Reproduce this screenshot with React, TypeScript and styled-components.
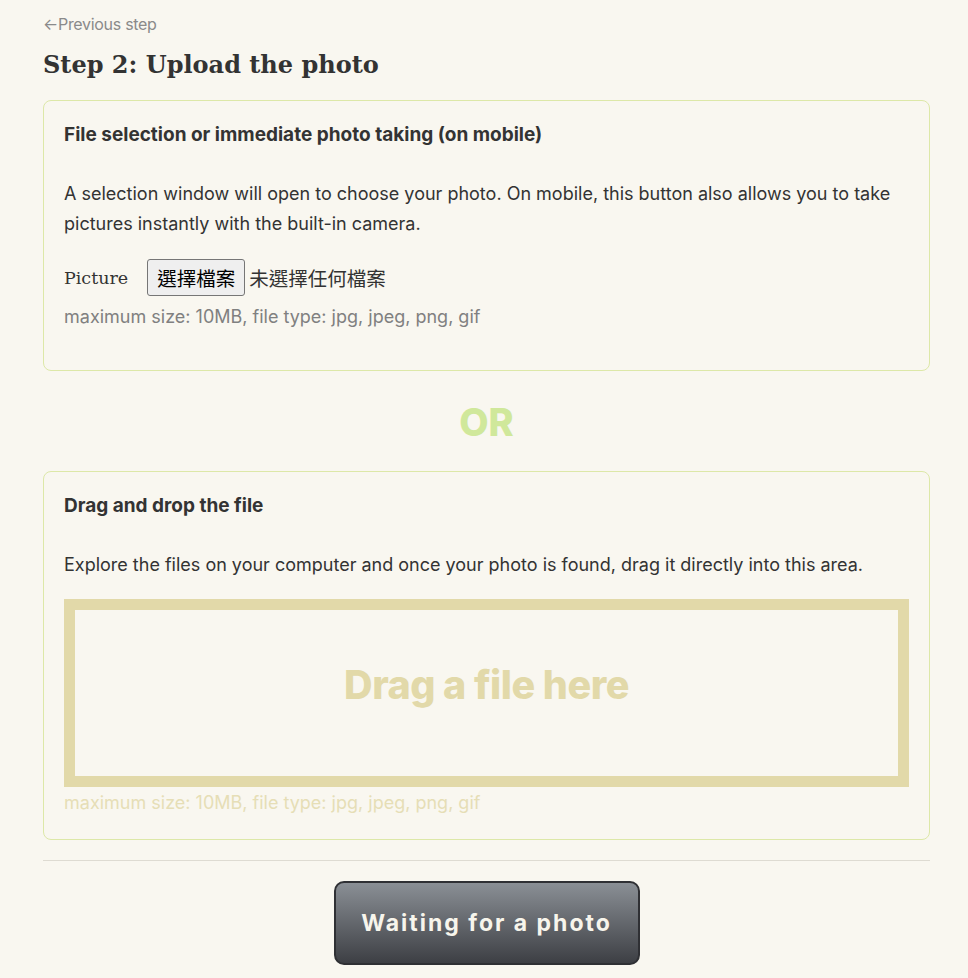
import React from 'react';
import styled, { createGlobalStyle } from 'styled-components';

const GlobalStyle = createGlobalStyle`
  html, body {
    margin: 0;
    background: #f9f7f0;
  }
  body {
    font-family: Inter, "Noto Sans CJK TC", sans-serif;
    color: #333;
  }
`;

const Page = styled.div`
  width: 887px;
  margin-left: 43px;
  padding-top: 14px;
`;

const BackLink = styled.a`
  display: inline-block;
  font-size: 16px;
  color: #8a8a8a;
  text-decoration: none;
  letter-spacing: -0.3px;
`;

const Title = styled.h1`
  font-family: "DejaVu Serif", Georgia, serif;
  font-size: 24px;
  line-height: 29px;
  font-weight: 700;
  color: #333;
  margin: 16px 0 21px;
`;

const Card = styled.section<{ $bottom: number }>`
  border: 1px solid #dde8a8;
  border-radius: 8px;
  padding: 20px 20px ${(p) => p.$bottom}px;
`;

const CardTitle = styled.h2`
  font-size: 19px;
  font-weight: 700;
  margin: 2px 0 33px;
  color: #333;
`;

const Text = styled.p`
  font-size: 18px;
  line-height: 30px;
  margin: 0 0 20px;
  color: #333;
`;

const FileRow = styled.div`
  display: flex;
  align-items: center;
`;

const Label = styled.label`
  font-family: "DejaVu Serif", Georgia, serif;
  font-size: 17.5px;
  color: #333;
  margin-right: 19px;
`;

const FileButton = styled.button`
  font-family: "Noto Sans CJK TC", sans-serif;
  font-size: 19.5px;
  height: 37px;
  padding: 0 9px;
  background: #efefef;
  border: 1px solid #767676;
  border-radius: 3px;
  color: #000;
  margin-right: 4px;
`;

const NoFile = styled.span`
  font-family: "Noto Sans CJK TC", sans-serif;
  font-size: 19.5px;
  color: #333;
`;

const Hint = styled.div<{ $muted?: boolean }>`
  font-size: 18px;
  line-height: 30px;
  color: ${(p) => (p.$muted ? '#e6deb6' : '#808080')};
  margin-top: ${(p) => (p.$muted ? '1px' : '6px')};
  margin-bottom: ${(p) => (p.$muted ? '0' : '15px')};
`;

const Or = styled.div`
  text-align: center;
  font-size: 38px;
  font-weight: 800;
  color: #d0e89b;
  padding: 28px 0 26px;
`;

const DropZone = styled.div`
  border: 11px solid #e2d9a9;
  height: 166px;
  display: flex;
  align-items: center;
  justify-content: center;
  font-size: 39.5px;
  font-weight: 800;
  color: #e2d9a9;
  letter-spacing: -0.5px;
  margin-top: -1px;
`;

const DropLabel = styled.span`
  margin-bottom: 17px;
`;

const Divider = styled.hr`
  border: none;
  border-top: 1px solid #dedbd2;
  margin: 20px 0 20px;
`;

const Footer = styled.div`
  display: flex;
  justify-content: center;
`;

const SubmitButton = styled.button`
  width: 306px;
  height: 84px;
  border: 2px solid #2f3034;
  border-radius: 10px;
  background: linear-gradient(#8a8f95, #3d3f44);
  color: #f7f5ec;
  font-family: Inter, sans-serif;
  font-size: 23px;
  font-weight: 700;
  letter-spacing: 2px;
`;

export default function App() {
  return (
    <>
      <GlobalStyle />
      <Page>
        <BackLink href="#">←Previous step</BackLink>
        <Title>Step 2: Upload the photo</Title>

        <Card $bottom={23}>
          <CardTitle>File selection or immediate photo taking (on mobile)</CardTitle>
          <Text>
            A selection window will open to choose your photo. On mobile, this button also allows you to take
            pictures instantly with the built-in camera.
          </Text>
          <FileRow>
            <Label>Picture</Label>
            <FileButton>選擇檔案</FileButton>
            <NoFile>未選擇任何檔案</NoFile>
          </FileRow>
          <Hint>maximum size: 10MB, file type: jpg, jpeg, png, gif</Hint>
        </Card>

        <Or>OR</Or>

        <Card $bottom={21}>
          <CardTitle>Drag and drop the file</CardTitle>
          <Text>
            Explore the files on your computer and once your photo is found, drag it directly into this area.
          </Text>
          <DropZone>
            <DropLabel>Drag a file here</DropLabel>
          </DropZone>
          <Hint $muted>maximum size: 10MB, file type: jpg, jpeg, png, gif</Hint>
        </Card>

        <Divider />
        <Footer>
          <SubmitButton>Waiting for a photo</SubmitButton>
        </Footer>
      </Page>
    </>
  );
}
